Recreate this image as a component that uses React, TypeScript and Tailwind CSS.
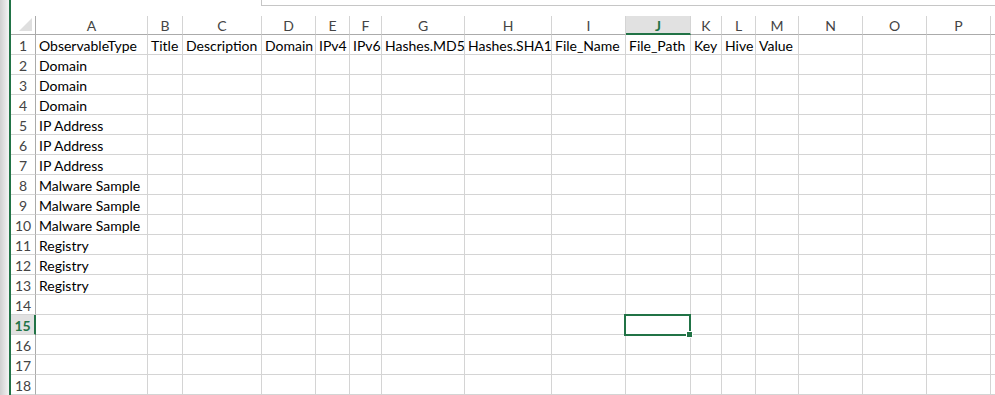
import React from "react";

const cols = ["A", "B", "C", "D", "E", "F", "G", "H", "I", "J", "K", "L", "M", "N", "O", "P", ""];

const headerRow = [
  "ObservableType",
  "Title",
  "Description",
  "Domain",
  "IPv4",
  "IPv6",
  "Hashes.MD5",
  "Hashes.SHA1",
  "File_Name",
  "File_Path",
  "Key",
  "Hive",
  "Value",
];

const types = [
  "Domain",
  "Domain",
  "Domain",
  "IP Address",
  "IP Address",
  "IP Address",
  "Malware Sample",
  "Malware Sample",
  "Malware Sample",
  "Registry",
  "Registry",
  "Registry",
];

const rows: string[][] = [headerRow, ...types.map((t) => [t])];
while (rows.length < 18) rows.push([]);

const gridCols =
  "grid w-max grid-cols-[25px_112px_35px_79px_54px_34px_32px_83px_87px_74px_65px_31px_34px_43px_64px_64px_64px_64px]";

export default function App() {
  return (
    <div className="flex h-[395px] w-[995px] overflow-hidden bg-white font-['Lato',sans-serif] text-[14px] text-black">
      {/* window edge */}
      <div className="w-[9px] shrink-0 bg-gradient-to-r from-[#cfcfcf] to-[#f4f4f4]" />
      <div className="w-[2px] shrink-0 bg-[#217346]" />

      <div className="flex min-w-0 flex-1 flex-col overflow-hidden">
        {/* formula bar edge */}
        <div className="h-[16px] shrink-0">
          <div className="ml-[250px] h-[6px] border-b border-l border-[#c6c6c6]" />
        </div>

        <div className="relative">
          <div className={gridCols}>
            {/* corner */}
            <div className="relative h-[19px] border-b border-r border-[#ababab]">
              <div className="absolute bottom-[3px] right-[3px] h-0 w-0 border-b-[13px] border-l-[13px] border-b-[#dfdfdf] border-l-transparent" />
            </div>
            {cols.map((c, j) =>
              c === "J" ? (
                <div
                  key={j}
                  className="flex h-[19px] items-center justify-center border-b-2 border-r border-b-[#217346] border-r-[#d4d4d4] bg-[#e1e1e1] pt-[2px] font-bold text-[#217346]"
                >
                  {c}
                </div>
              ) : (
                <div
                  key={j}
                  className="flex h-[19px] items-center justify-center border-b border-r border-b-[#ababab] border-r-[#d4d4d4] text-[#444]"
                >
                  {c}
                </div>
              )
            )}

            {rows.map((r, i) => (
              <React.Fragment key={i}>
                {i === 14 ? (
                  <div className="flex h-[20px] items-end justify-center border-b border-r-2 border-b-[#d4d4d4] border-r-[#217346] bg-[#e1e1e1] pb-[1px] font-bold leading-none text-[#217346]">
                    {i + 1}
                  </div>
                ) : (
                  <div className="flex h-[20px] items-end justify-center border-b border-r border-b-[#d4d4d4] border-r-[#ababab] pb-[1px] leading-none text-[#444]">
                    {i + 1}
                  </div>
                )}
                {cols.map((c, j) => (
                  <div
                    key={j}
                    className="flex h-[20px] items-end overflow-visible whitespace-nowrap border-b border-r border-[#d4d4d4] pb-[1px] pl-[3px] leading-none"
                  >
                    {r[j] ?? ""}
                  </div>
                ))}
              </React.Fragment>
            ))}
          </div>

          {/* active cell J15 */}
          <div className="pointer-events-none absolute left-[613px] top-[298px] h-[22px] w-[67px] border-2 border-[#217346]">
            <div className="absolute -bottom-[4px] -right-[4px] h-[7px] w-[7px] border border-white bg-[#217346]" />
          </div>
        </div>
      </div>
    </div>
  );
}
